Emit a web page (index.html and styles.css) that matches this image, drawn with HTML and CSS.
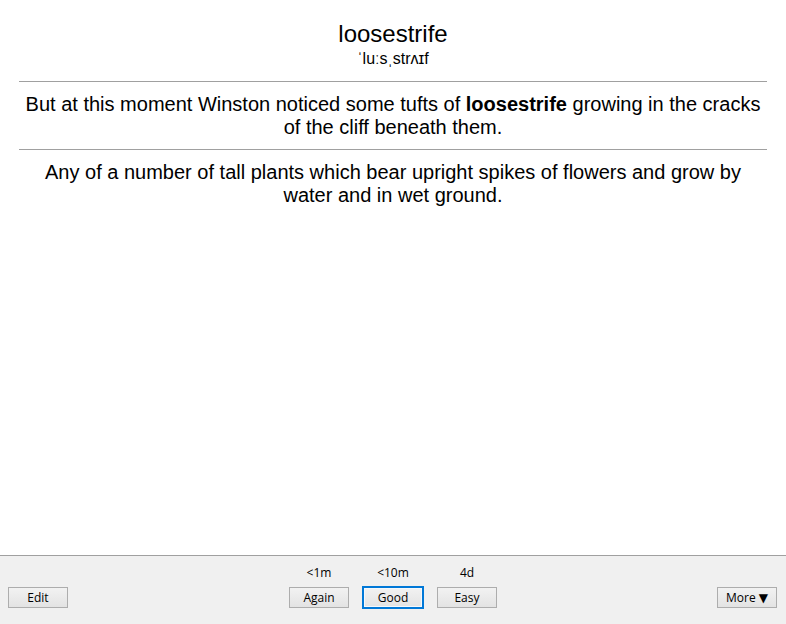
FILE: index.html
```html
<!DOCTYPE html>
<html>
<head>
<meta charset="utf-8">
<link rel="stylesheet" href="styles.css">
</head>
<body>
<div class="page">
  <main class="card">
    <div class="word">loosestrife</div>
    <div class="pron">ˈluːsˌstrʌɪf</div>
    <hr class="rule rule-first">
    <div class="para">But at this moment Winston noticed some tufts of <b>loosestrife</b> growing in the cracks of the cliff beneath them.</div>
    <hr class="rule">
    <div class="para">Any of a number of tall plants which bear upright spikes of flowers and grow by water and in wet ground.</div>
  </main>
  <footer class="bar">
    <div class="bar-left">
      <button class="btn">Edit</button>
    </div>
    <div class="answers">
      <div class="answer">
        <span class="due">&lt;1m</span>
        <button class="btn">Again</button>
      </div>
      <div class="answer">
        <span class="due">&lt;10m</span>
        <button class="btn btn-default">Good</button>
      </div>
      <div class="answer">
        <span class="due">4d</span>
        <button class="btn">Easy</button>
      </div>
    </div>
    <div class="bar-right">
      <button class="btn">More <span class="tri">▼</span></button>
    </div>
  </footer>
</div>
</body>
</html>
```
FILE: styles.css
```css
html, body {
  margin: 0;
  padding: 0;
  background: #ffffff;
}

.page {
  display: flex;
  flex-direction: column;
  height: 624px;
  overflow: hidden;
}

.card {
  flex: 1;
  padding: 20px 19px 0 19px;
  text-align: center;
  font-family: "Liberation Sans", Arial, sans-serif;
  color: #000;
}

.word {
  font-size: 24px;
  line-height: 28px;
}

.pron {
  font-size: 16px;
  line-height: 18px;
  margin-top: 2px;
}

.rule {
  border: 0;
  border-top: 1px solid #a0a0a0;
  height: 0;
  margin: 10px 0 11px 0;
}

.rule-first {
  margin-top: 13px;
}

.para {
  font-size: 20px;
  line-height: 23px;
}

.para b {
  font-weight: bold;
}

.bar {
  box-sizing: border-box;
  height: 69px;
  flex: none;
  border-top: 1px solid #a0a0a0;
  background: #f0f0f0;
  display: grid;
  grid-template-columns: 1fr auto 1fr;
  align-items: end;
  padding: 0 9px 16px 8px;
  font-family: "Open Sans", "Noto Sans", sans-serif;
  font-size: 12px;
}

.bar-right {
  display: flex;
  justify-content: flex-end;
}

.answers {
  display: flex;
  gap: 14px;
  padding-left: 1px;
}

.answer {
  display: flex;
  flex-direction: column;
  align-items: center;
}

.due {
  line-height: 16px;
  margin-bottom: 6px;
  color: #000;
}

.btn {
  width: 60px;
  height: 21px;
  padding: 0;
  margin: 0;
  border: 1px solid #adadad;
  background: linear-gradient(#f2f2f2, #e3e3e3);
  font-family: "Open Sans", "Noto Sans", sans-serif;
  font-size: 12px;
  line-height: 17px;
  color: #000;
}

.tri {
  font-family: "DejaVu Sans", sans-serif;
  font-size: 12px;
}

.btn-default {
  border-color: #0078d7;
  outline: 1px solid #0078d7;
  box-shadow: inset 0 0 0 1px #f4f8fc;
}
```
